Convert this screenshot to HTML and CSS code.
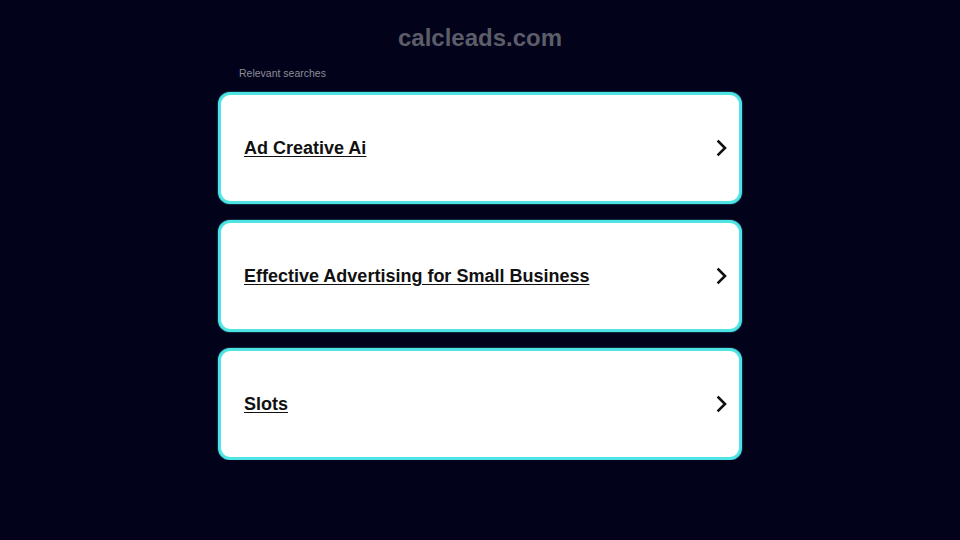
FILE: index.html
```html
<!DOCTYPE html>
<html lang="en">
<head>
<meta charset="utf-8">
<title>calcleads.com</title>
<link rel="stylesheet" href="styles.css">
</head>
<body>
<div class="page">
  <h1 class="domain">calcleads.com</h1>
  <div class="results">
    <div class="label">Relevant searches</div>
    <a class="card" href="#"><span class="card-text">Ad Creative Ai</span>
      <svg class="chev" width="12" height="18" viewBox="0 0 12 18"><path d="M2.5 2.5 L9 9 L2.5 15.5" fill="none" stroke="#111" stroke-width="2.6" stroke-linecap="square"/></svg></a>
    <a class="card" href="#"><span class="card-text">Effective Advertising for Small Business</span>
      <svg class="chev" width="12" height="18" viewBox="0 0 12 18"><path d="M2.5 2.5 L9 9 L2.5 15.5" fill="none" stroke="#111" stroke-width="2.6" stroke-linecap="square"/></svg></a>
    <a class="card" href="#"><span class="card-text">Slots</span>
      <svg class="chev" width="12" height="18" viewBox="0 0 12 18"><path d="M2.5 2.5 L9 9 L2.5 15.5" fill="none" stroke="#111" stroke-width="2.6" stroke-linecap="square"/></svg></a>
  </div>
</div>
</body>
</html>
```

FILE: styles.css
```css
html, body {
  margin: 0;
  padding: 0;
  background: #02031a;
  font-family: "Liberation Sans", Arial, sans-serif;
}
.page {
  display: flex;
  flex-direction: column;
  align-items: center;
  padding-top: 24px;
}
.domain {
  margin: 0;
  font-size: 24px;
  line-height: 28px;
  font-weight: bold;
  color: #5c5d69;
}
.results {
  width: 524px;
  display: flex;
  flex-direction: column;
  gap: 16px;
  margin-top: 14px;
}
.label {
  font-size: 10.5px;
  line-height: 14px;
  color: #8c8d99;
  padding-left: 21px;
  margin-bottom: -4px;
}
.card {
  box-sizing: border-box;
  height: 112px;
  background: #fff;
  border: 3px solid #4ee3e4;
  border-radius: 12px;
  display: flex;
  align-items: center;
  justify-content: space-between;
  padding: 0 11px 0 23px;
  text-decoration: none;
  box-shadow: 0 0 2px rgba(78, 227, 228, 0.6);
}
.card-text {
  font-size: 18px;
  font-weight: bold;
  color: #111;
  text-decoration: underline;
  text-underline-offset: 2px;
}
.chev {
  display: block;
}
```
